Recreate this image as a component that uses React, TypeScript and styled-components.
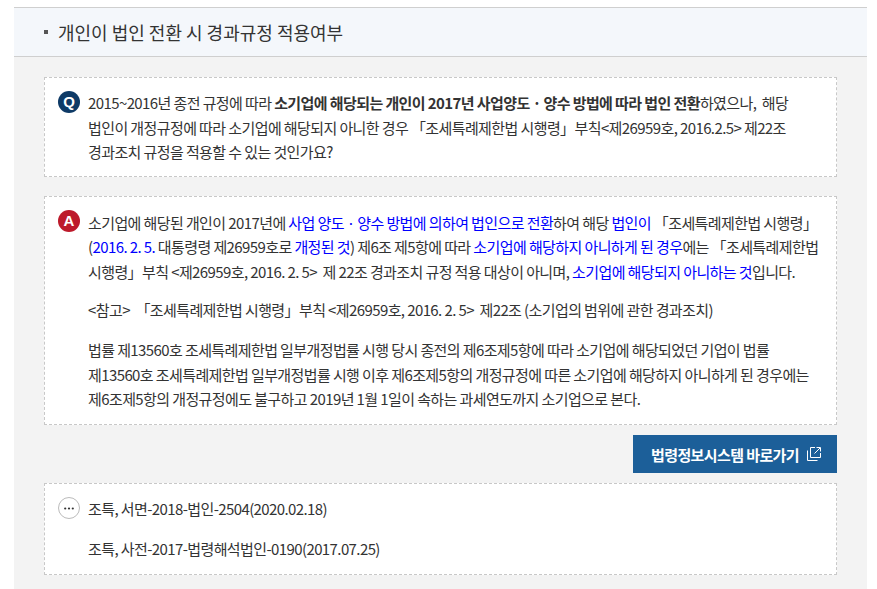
import React from "react";
import styled, { createGlobalStyle } from "styled-components";

const Global = createGlobalStyle`
  html, body { margin: 0; padding: 0; background: #fff; }
  body { font-family: "Noto Sans CJK KR", "Noto Sans", sans-serif; color: #333; }
`;
const Page = styled.div`
  padding: 7px 10px 0 14px;
  height: 582px;
  box-sizing: content-box;
`;
const Section = styled.section`
  background: #f3f3f3;
  height: 582px;
  border-top: 1px solid #cfcfcf;
  box-sizing: border-box;
`;
const Header = styled.header`
  height: 49px;
  background: #f4f7fb;
  border-bottom: 1px solid #cfcfcf;
  box-sizing: border-box;
  display: flex;
  align-items: center;
  padding: 0 0 1px 30px;
  gap: 10px;
  font-size: 18px;
  color: #333;
`;
const Bullet = styled.i`
  width: 4px;
  height: 4px;
  background: #555;
  display: block;
`;
const Body = styled.div`
  padding: 20px 30px 0;
  display: flex;
  flex-direction: column;
`;
const Card = styled.div<{ $mt?: number; $h: number }>`
  background: #fff;
  border: 1px dashed #c8c8c8;
  box-sizing: border-box;
  height: ${(p) => p.$h}px;
  margin-top: ${(p) => p.$mt ?? 0}px;
  padding: 13px 13px 0;
  display: flex;
  gap: 8px;
`;
const Badge = styled.span<{ $bg: string }>`
  flex: none;
  width: 22px;
  height: 22px;
  border-radius: 50%;
  background: ${(p) => p.$bg};
  color: #fff;
  font: 700 15px/22px "Liberation Sans", sans-serif;
  text-align: center;
`;
const MoreBadge = styled.span`
  flex: none;
  width: 22px;
  height: 22px;
  box-sizing: border-box;
  border: 1px solid #bbb;
  border-radius: 50%;
  background: #fff;
  display: flex;
  align-items: center;
  justify-content: center;
`;
const Text = styled.div`
  font-size: 15px;
  line-height: 24.5px;
  letter-spacing: -0.6px;
  white-space: pre;
  color: #333;
`;
const AnswerText = styled(Text)`
  padding-top: 0.5px;
`;
const Para = styled.p<{ $mt?: number }>`
  margin: ${(p) => p.$mt ?? 0}px 0 0;
`;
const Strong = styled.b`
  font-weight: 700;
`;
const Blue = styled.span`
  color: #0000ff;
`;
const ButtonRow = styled.div`
  display: flex;
  justify-content: flex-end;
  margin-top: 10px;
`;
const LinkButton = styled.a`
  width: 204px;
  height: 38px;
  background: #1c5f99;
  color: #fff;
  display: flex;
  align-items: center;
  justify-content: flex-end;
  padding-right: 16px;
  box-sizing: border-box;
  gap: 8px;
  font-size: 15px;
  font-weight: 700;
  letter-spacing: -0.6px;
`;

export default function App() {
  return (
    <Page>
      <Global />
      <Section>
        <Header>
          <Bullet />
          <span>개인이 법인 전환 시 경과규정 적용여부</span>
        </Header>
        <Body>
          <Card $h={100}>
            <Badge $bg="#0e3a66">Q</Badge>
            <Text>
              2015~2016년 종전 규정에 따라 <Strong>소기업에 해당되는 개인이 2017년 사업양도 · 양수 방법에 따라 법인 전환</Strong>{"하였으나,  해당"}
              <br />
              법인이 개정규정에 따라 소기업에 해당되지 아니한 경우 「조세특례제한법 시행령」부칙&lt;제26959호, 2016.2.5&gt; 제22조
              <br />
              경과조치 규정을 적용할 수 있는 것인가요?
            </Text>
          </Card>
          <Card $h={229} $mt={19}>
            <Badge $bg="#bd1a2b">A</Badge>
            <AnswerText>
              <Para>
                소기업에 해당된 개인이 2017년에 <Blue>사업 양도 · 양수 방법에 의하여 법인으로 전환</Blue>하여 해당 <Blue>법인이</Blue> 「조세특례제한법 시행령」
                <br />
                (<Blue>2016. 2. 5.</Blue> 대통령령 제26959호로 <Blue>개정된 것</Blue>) 제6조 제5항에 따라 <Blue>소기업에 해당하지 아니하게 된 경우</Blue>에는 「조세특례제한법
                <br />
                시행령」부칙 &lt;제26959호, 2016. 2. 5&gt;{"  "}제 22조 경과조치 규정 적용 대상이 아니며, <Blue>소기업에 해당되지 아니하는 것</Blue>입니다.
              </Para>
              <Para $mt={14}>&lt;참고&gt;{"  "}「조세특례제한법 시행령」부칙 &lt;제26959호, 2016. 2. 5&gt;{"  "}제22조 (소기업의 범위에 관한 경과조치)</Para>
              <Para $mt={15.5}>
                법률 제13560호 조세특례제한법 일부개정법률 시행 당시 종전의 제6조제5항에 따라 소기업에 해당되었던 기업이 법률
                <br />
                제13560호 조세특례제한법 일부개정법률 시행 이후 제6조제5항의 개정규정에 따른 소기업에 해당하지 아니하게 된 경우에는
                <br />
                제6조제5항의 개정규정에도 불구하고 2019년 1월 1일이 속하는 과세연도까지 소기업으로 본다.
              </Para>
            </AnswerText>
          </Card>
          <ButtonRow>
            <LinkButton>
              <span>법령정보시스템 바로가기</span>
              <svg width="14" height="14" viewBox="0 0 14 14" fill="none" stroke="#fff" strokeWidth="1">
                <path d="M8 0.5H3.5V10.5H13.5V6M0.5 3.5V13.5H10.5M7.5 6.5L13 1M9.5 0.5H13.5V4.5" />
              </svg>
            </LinkButton>
          </ButtonRow>
          <Card $h={92} $mt={10}>
            <MoreBadge>
              <svg width="10" height="3" viewBox="0 0 10 3" fill="#333">
                <circle cx="1.2" cy="1.5" r="1.1" />
                <circle cx="5" cy="1.5" r="1.1" />
                <circle cx="8.8" cy="1.5" r="1.1" />
              </svg>
            </MoreBadge>
            <Text>
              <Para>조특, 서면-2018-법인-2504(2020.02.18)</Para>
              <Para $mt={15.5}>조특, 사전-2017-법령해석법인-0190(2017.07.25)</Para>
            </Text>
          </Card>
        </Body>
      </Section>
    </Page>
  );
}
